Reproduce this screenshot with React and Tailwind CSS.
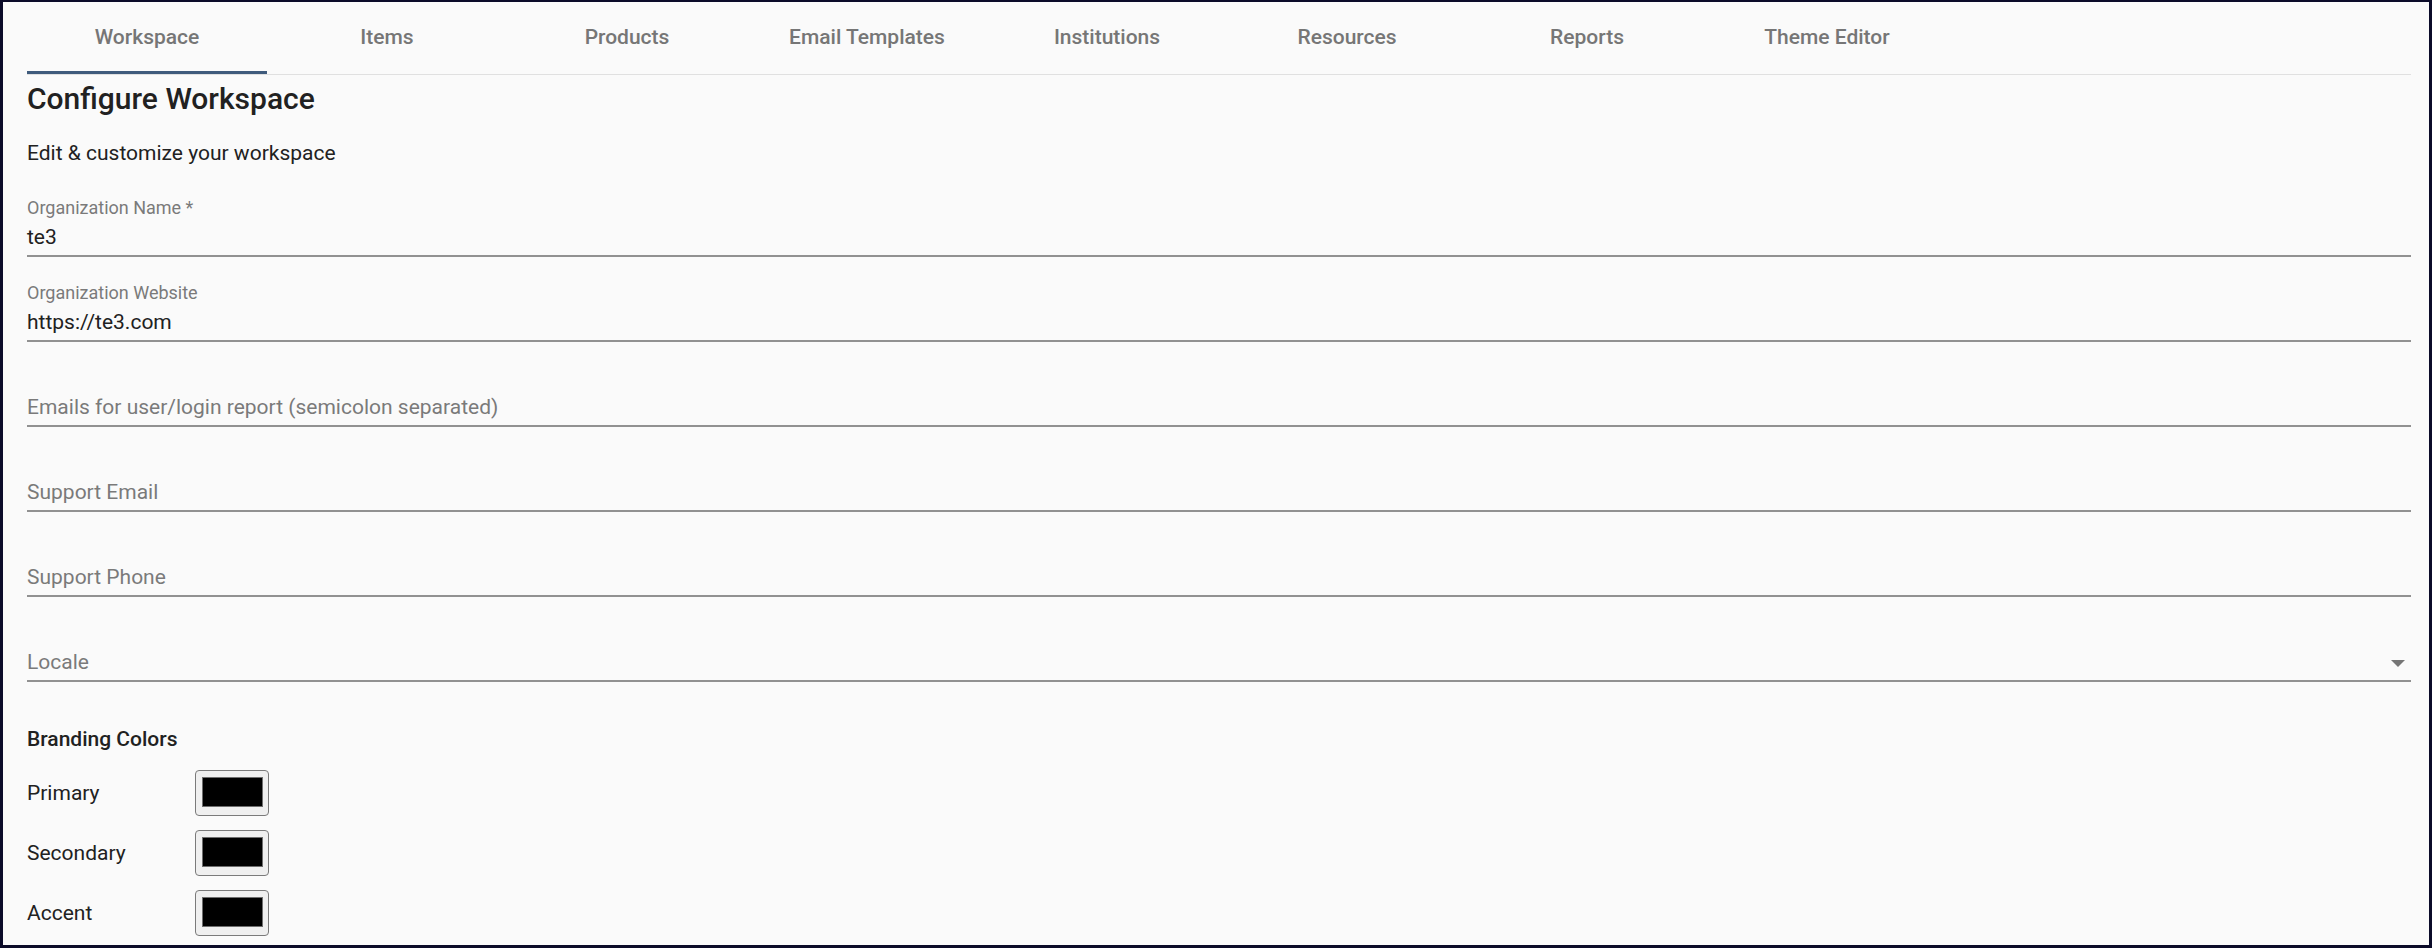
import React from "react";

const tabs = [
  "Workspace",
  "Items",
  "Products",
  "Email Templates",
  "Institutions",
  "Resources",
  "Reports",
  "Theme Editor",
];

function Field({ label, value, dropdown }) {
  const filled = value !== undefined;
  return (
    <div className="h-[85px] flex flex-col justify-end">
      <div className="text-[18px] leading-[22px] text-[#7a7a7a] h-[22px] mb-[2px]">
        {filled ? label : ""}
      </div>
      <div className="flex items-center justify-between h-[32px] pb-[2px] border-b-2 border-[#919191] box-content">
        <span
          className={
            "text-[21px] leading-[32px] " +
            (filled ? "text-[#212121]" : "text-[#7a7a7a]")
          }
        >
          {filled ? value : label}
        </span>
        {dropdown && (
          <svg width="14" height="7" viewBox="0 0 14 7" className="mr-[6px] mt-[2px]">
            <polygon points="0,0 14,0 7,7" fill="#757575" />
          </svg>
        )}
      </div>
    </div>
  );
}

function Swatch() {
  return (
    <div className="w-[74px] h-[46px] rounded-[4px] border border-[#7a7a7a] bg-[#efefef] pl-[6px] pt-[6px]">
      <div className="w-[61px] h-[30px] bg-black border border-[#6e6e6e]" />
    </div>
  );
}

export default function App() {
  return (
    <div className="w-[2432px] h-[948px] overflow-hidden bg-[#fafafa] border-x-[3px] border-b-[3px] border-t-2 border-[#0b0b29] pl-[24px] pr-[18px] font-['Roboto',sans-serif]">
      <div className="flex border-b border-[#e0e0e0]">
        {tabs.map((t, i) => (
          <div
            key={t}
            className="relative w-[240px] h-[72px] flex items-center justify-center text-[21px] font-medium text-[#767676]"
          >
            {t}
            {i === 0 && (
              <div className="absolute left-0 right-0 bottom-0 h-[3px] bg-[#3f5b7c]" />
            )}
          </div>
        ))}
      </div>

      <h1 className="mt-[6px] text-[30px] leading-[36px] font-medium text-[#212121]">
        Configure Workspace
      </h1>
      <p className="mt-[20px] text-[21px] leading-[32px] text-[#212121]">
        Edit &amp; customize your workspace
      </p>

      <div className="mt-[3px] flex flex-col">
        <Field label="Organization Name *" value="te3" />
        <Field label="Organization Website" value="https://te3.com" />
        <Field label="Emails for user/login report (semicolon separated)" />
        <Field label="Support Email" />
        <Field label="Support Phone" />
        <Field label="Locale" dropdown />
      </div>

      <div className="mt-[41px] text-[21px] leading-[32px] font-medium text-[#212121]">
        Branding Colors
      </div>
      <div className="mt-[8px] flex flex-col">
        {["Primary", "Secondary", "Accent"].map((c) => (
          <div key={c} className="flex items-center h-[60px]">
            <div className="w-[168px] text-[21px] leading-[32px] text-[#212121]">{c}</div>
            <Swatch />
          </div>
        ))}
      </div>
    </div>
  );
}
